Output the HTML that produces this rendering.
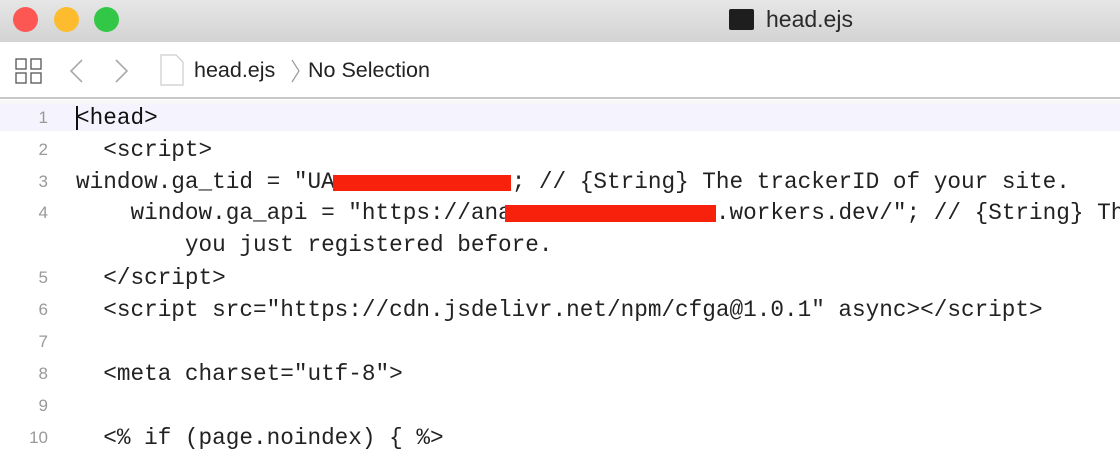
<!DOCTYPE html>
<html><head><style>
body{margin:0;width:1120px;height:444px;overflow:hidden;background:#fff;font-family:"Liberation Sans",sans-serif;position:relative}
.title{position:absolute;left:0;top:0;width:1120px;height:42px;background:linear-gradient(#e6e6e6,#d3d3d3);border-bottom:1px solid #c4c4c4}
.dot{position:absolute;top:7px;width:25px;height:25px;border-radius:50%}
.tb{position:absolute;top:42px;left:0;width:1120px;height:55px;background:#fff;border-bottom:2px solid #c8c8c8}
.code{position:absolute;left:0;top:100px;width:1120px}
.ln{position:absolute;left:0;width:1120px;height:32px;font-family:"Liberation Mono",monospace;font-size:22.7px;line-height:32px;color:#222;white-space:pre}
.n{position:absolute;right:1072px;font-size:17px;color:#999;font-family:"Liberation Sans",sans-serif}
.t{position:absolute;left:76px}
.h{color:transparent}
.red{position:absolute;background:#f8220c}
</style></head><body>
<div class="title">
<div class="dot" style="left:13px;background:#fc5753"></div>
<div class="dot" style="left:54px;background:#fdbc2e"></div>
<div class="dot" style="left:94px;background:#33c748"></div>
<div style="position:absolute;left:729px;top:9px;width:25px;height:21px;background:#1e1e1e;border-radius:2px"></div>
<div style="position:absolute;left:766px;top:6px;font-size:23px;color:#2a2a2a">head.ejs</div>
</div>
<div class="tb">
<svg style="position:absolute;left:15px;top:16px" width="28" height="26" viewBox="0 0 28 26" fill="none" stroke="#555" stroke-width="1.3"><rect x="1" y="1" width="10" height="10"/><rect x="16" y="1" width="10" height="10"/><rect x="1" y="15" width="10" height="10"/><rect x="16" y="15" width="10" height="10"/></svg>
<svg style="position:absolute;left:68px;top:16px" width="70" height="26" fill="none" stroke="#aaa" stroke-width="1.6"><path d="M14 2L3 13L14 24"/><path d="M48 2L59 13L48 24"/></svg>
<svg style="position:absolute;left:160px;top:12px" width="24" height="32" fill="none" stroke="#ccc" stroke-width="1.2"><path d="M1 1H16L23 8V31H1Z"/></svg>
<div style="position:absolute;left:194px;top:16px;font-size:21.5px;color:#222">head.ejs</div>
<svg style="position:absolute;left:290px;top:16px" width="12" height="26" fill="none" stroke="#999" stroke-width="1.2"><path d="M2 2L9 13L2 24"/></svg>
<div style="position:absolute;left:308px;top:16px;font-size:21.5px;color:#222">No Selection</div>
</div>
<div style="position:absolute;left:0;top:100px;width:1120px;height:4px;background:#f7f7f7"></div>
<div style="position:absolute;left:0;top:104px;width:1120px;height:27px;background:#f5f3fd"></div>
<div class="code">
<div class="ln" style="top:2px"><span class="n">1</span><span class="t" style="color:#111">&lt;head&gt;</span><span style="position:absolute;left:76px;top:4px;width:2px;height:24px;background:#111"></span></div>
<div class="ln" style="top:34px"><span class="n">2</span><span class="t">  &lt;script&gt;</span></div>
<div class="ln" style="top:66px"><span class="n">3</span><span class="t">window.ga_tid = "UA<span class="h">-XXXXXXXXX-X"</span>; // {String} The trackerID of your site.</span></div>
<div class="ln" style="top:97px"><span class="n">4</span><span class="t">    window.ga_api = "https://ana<span class="h">lytics-xxxxxxxx</span>.workers.dev/"; // {String} The</span></div>
<div class="ln" style="top:129px"><span class="t">        you just registered before.</span></div>
<div class="ln" style="top:162px"><span class="n">5</span><span class="t">  &lt;/script&gt;</span></div>
<div class="ln" style="top:194px"><span class="n">6</span><span class="t">  &lt;script src="https://cdn.jsdelivr.net/npm/cfga@1.0.1" async&gt;&lt;/script&gt;</span></div>
<div class="ln" style="top:226px"><span class="n">7</span></div>
<div class="ln" style="top:258px"><span class="n">8</span><span class="t">  &lt;meta charset="utf-8"&gt;</span></div>
<div class="ln" style="top:290px"><span class="n">9</span></div>
<div class="ln" style="top:322px"><span class="n">10</span><span class="t">  &lt;% if (page.noindex) { %&gt;</span></div>
</div>
<div class="red" style="left:333px;top:175px;width:178px;height:16px"></div>
<div class="red" style="left:505px;top:205px;width:211px;height:17px"></div>
</body></html>
